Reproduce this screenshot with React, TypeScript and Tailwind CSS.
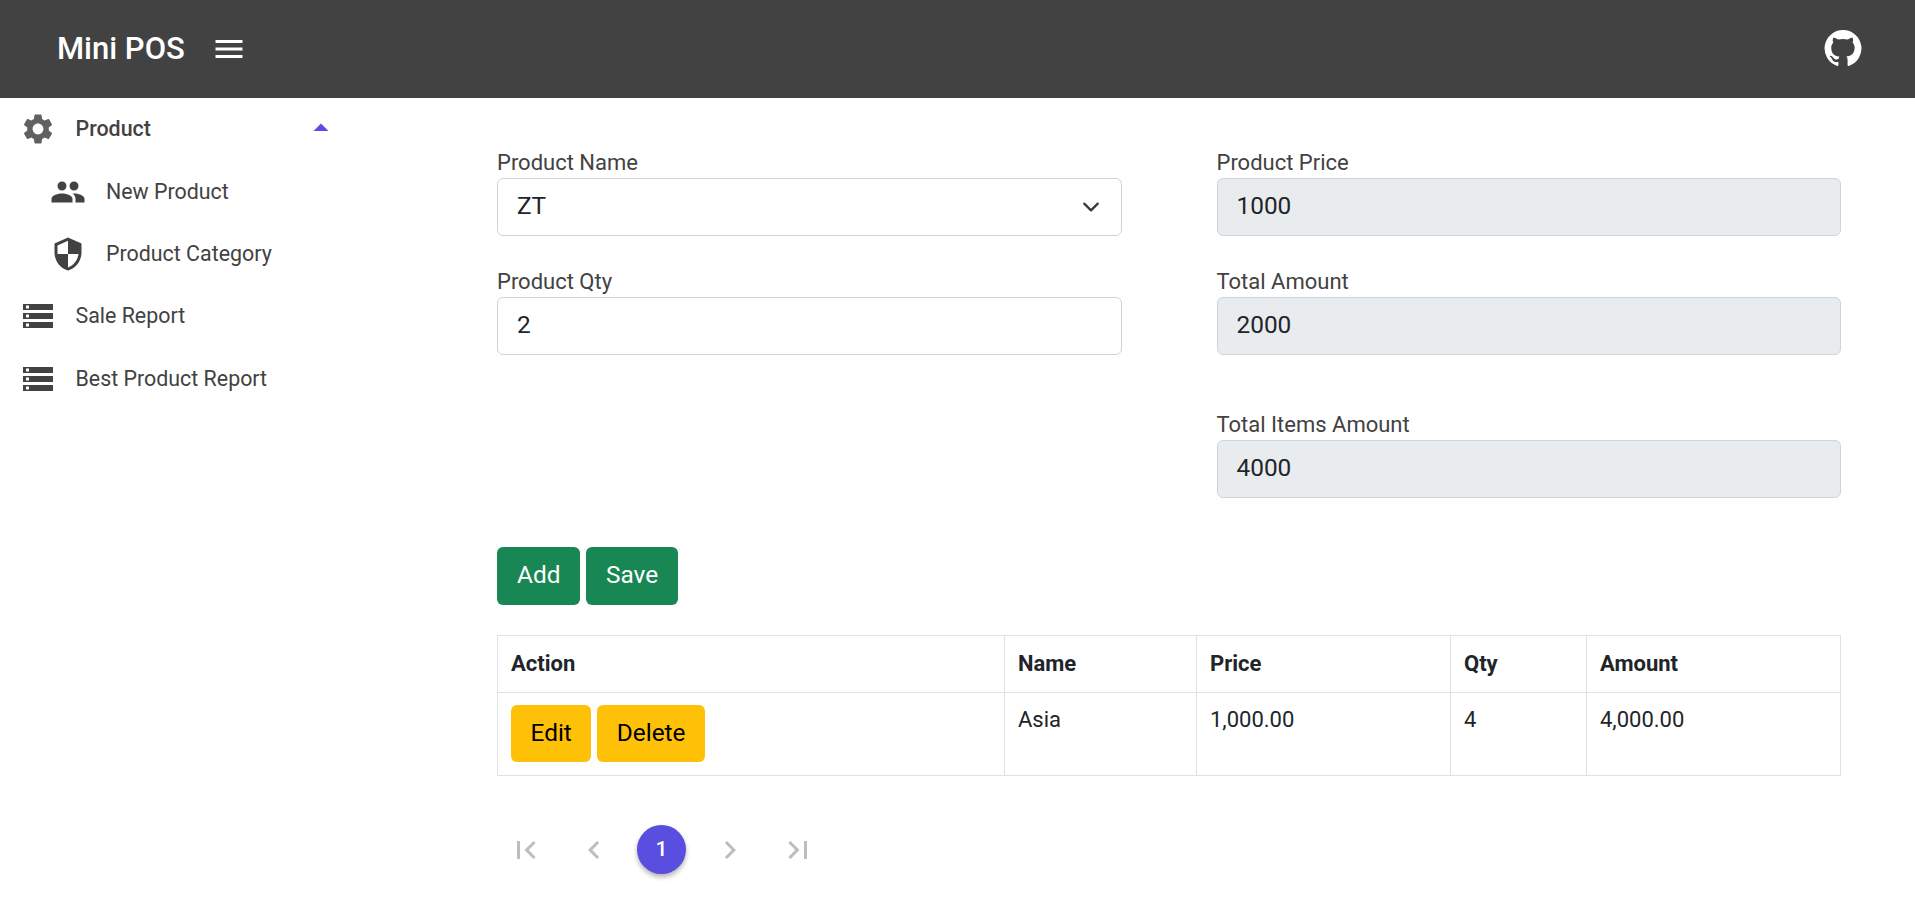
import {
  MdArrowDropUp,
  MdChevronLeft,
  MdChevronRight,
  MdFirstPage,
  MdLastPage,
  MdMenu,
  MdPeople,
  MdSecurity,
  MdSettings,
  MdStorage,
} from "react-icons/md";

function GithubIcon() {
  return (
    <svg viewBox="0 0 24 24" className="-mt-[2px] h-[40px] w-[40px] fill-white">
      <path d="M12 1.27a11 11 0 00-3.48 21.46c.55.09.73-.28.73-.55v-1.84c-3.03.64-3.67-1.46-3.67-1.46-.55-1.29-1.28-1.65-1.28-1.65-.92-.65.1-.65.1-.65 1.1 0 1.73 1.1 1.73 1.1.92 1.65 2.57 1.2 3.21.92a2 2 0 01.64-1.47c-2.47-.27-5.04-1.19-5.04-5.5 0-1.1.46-2.1 1.2-2.84a3.76 3.76 0 010-2.93s.91-.28 3.11 1.1c1.8-.49 3.7-.49 5.5 0 2.1-1.38 3.02-1.1 3.02-1.1a3.76 3.76 0 010 2.93c.83.74 1.2 1.74 1.2 2.94 0 4.21-2.57 5.13-5.04 5.4.45.37.82.92.82 2.02v3.03c0 .27.1.64.73.55A11 11 0 0012 1.27" />
    </svg>
  );
}

function Field({
  label,
  value,
  disabled,
  select,
}: {
  label: string;
  value: string;
  disabled?: boolean;
  select?: boolean;
}) {
  return (
    <div>
      <div className="h-[27px] text-[22px] leading-[24px] text-[#424242]">
        {label}
      </div>
      <div
        className={
          disabled
            ? "flex h-[58px] items-center justify-between rounded-md border border-[#ced4da] bg-[#e9ecef] px-[19px] pb-[1px] text-[24.4px] text-[#212529]"
            : "flex h-[58px] items-center justify-between rounded-md border border-[#ced4da] bg-white px-[19px] pb-[1px] text-[24.4px] text-[#212529]"
        }
      >
        <span>{value}</span>
        {select && (
          <svg
            viewBox="0 0 16 16"
            className="mr-[2px] h-[18px] w-[18px] fill-none stroke-[#343a40] stroke-2"
          >
            <path d="M2 5l6 6 6-6" strokeLinecap="round" strokeLinejoin="round" />
          </svg>
        )}
      </div>
    </div>
  );
}

function NavItem({
  icon,
  label,
  sub,
  bold,
}: {
  icon: React.ReactNode;
  label: string;
  sub?: boolean;
  bold?: boolean;
}) {
  return (
    <div
      className={
        sub
          ? "flex h-[62.4px] items-center pl-[50px] text-[#424242]"
          : "flex h-[62.4px] items-center pl-[20px] text-[#424242]"
      }
    >
      <span className={sub ? "flex w-[56px] shrink-0 items-center" : "flex w-[55.5px] shrink-0 items-center"}>
        {icon}
      </span>
      <span
        className={
          bold
            ? "text-[21.4px] font-medium text-[#424242]"
            : "text-[21.4px] text-[#424242]"
        }
      >
        {label}
      </span>
    </div>
  );
}

export default function App() {
  return (
    <div className="min-h-[911px] bg-white font-['Roboto',sans-serif]">
      <header className="flex h-[98px] items-center justify-between bg-[#424242] pl-[57px] pr-[52px]">
        <div className="flex items-center gap-[26px]">
          <span className="text-[31px] font-medium text-white">Mini POS</span>
          <MdMenu className="text-[36px] text-white" />
        </div>
        <GithubIcon />
      </header>

      <div className="flex">
        <aside className="w-[353px] shrink-0">
          <div className="relative">
            <NavItem
              icon={<MdSettings className="text-[36px] text-[#616161]" />}
              label="Product"
              bold
            />
            <MdArrowDropUp className="absolute right-[14px] top-[12px] text-[36px] text-[#5a4ee0]" />
          </div>
          <NavItem
            icon={<MdPeople className="text-[36px]" />}
            label="New Product"
            sub
          />
          <NavItem
            icon={<MdSecurity className="text-[36px]" />}
            label="Product Category"
            sub
          />
          <NavItem icon={<MdStorage className="text-[36px]" />} label="Sale Report" />
          <NavItem
            icon={<MdStorage className="text-[36px]" />}
            label="Best Product Report"
          />
        </aside>

        <main className="ml-[144px] mr-[74px] flex-1 pt-[53px]">
          <div className="grid grid-cols-2 gap-x-[95px]">
            <div className="flex flex-col gap-[34px]">
              <Field label="Product Name" value="ZT" select />
              <Field label="Product Qty" value="2" />
            </div>
            <div className="flex flex-col gap-[34px]">
              <Field label="Product Price" value="1000" disabled />
              <Field label="Total Amount" value="2000" disabled />
              <div className="mt-[24px]">
                <Field label="Total Items Amount" value="4000" disabled />
              </div>
            </div>
          </div>

          <div className="mt-[49px] flex gap-[6px]">
            <button className="h-[58px] rounded-md bg-[#198754] px-[20px] pb-[2px] text-[24.4px] text-white">
              Add
            </button>
            <button className="h-[58px] rounded-md bg-[#198754] px-[19.5px] pb-[2px] text-[24.4px] text-white">
              Save
            </button>
          </div>

          <table className="mt-[30px] w-full border-collapse text-[22px] text-[#212529]">
            <thead>
              <tr className="h-[57px] text-left font-bold">
                <th className="w-[507px] border border-[#dee2e6] px-[13px] pb-[2px]">Action</th>
                <th className="w-[192px] border border-[#dee2e6] px-[13px] pb-[2px]">Name</th>
                <th className="w-[254px] border border-[#dee2e6] px-[13px] pb-[2px]">Price</th>
                <th className="w-[136px] border border-[#dee2e6] px-[13px] pb-[2px]">Qty</th>
                <th className="border border-[#dee2e6] px-[13px] pb-[2px]">Amount</th>
              </tr>
            </thead>
            <tbody>
              <tr className="h-[83px] align-top">
                <td className="border border-[#dee2e6] px-[13px] py-[12px]">
                  <div className="flex gap-[6px]">
                    <button className="h-[57px] rounded-md bg-[#ffc107] px-[19.5px] text-[24.4px] text-black">
                      Edit
                    </button>
                    <button className="h-[57px] rounded-md bg-[#ffc107] px-[19.5px] text-[24.4px] text-black">
                      Delete
                    </button>
                  </div>
                </td>
                <td className="border border-[#dee2e6] px-[13px] py-[12px] leading-[30px]">Asia</td>
                <td className="border border-[#dee2e6] px-[13px] py-[12px] leading-[30px]">1,000.00</td>
                <td className="border border-[#dee2e6] px-[13px] py-[12px] leading-[30px]">4</td>
                <td className="border border-[#dee2e6] px-[13px] py-[12px] leading-[30px]">4,000.00</td>
              </tr>
            </tbody>
          </table>

          <div className="mt-[49px] flex items-center gap-[19px] pl-[4px] text-[#bdbdbd]">
            <span className="flex h-[49px] w-[49px] items-center justify-center">
              <MdFirstPage className="text-[36px]" />
            </span>
            <span className="flex h-[49px] w-[49px] items-center justify-center">
              <MdChevronLeft className="text-[36px]" />
            </span>
            <span className="flex h-[49px] w-[49px] items-center justify-center rounded-full bg-[#5a4ee0] text-[21px] font-medium text-white shadow-[0_3px_5px_rgba(0,0,0,0.3)]">
              1
            </span>
            <span className="flex h-[49px] w-[49px] items-center justify-center">
              <MdChevronRight className="text-[36px]" />
            </span>
            <span className="flex h-[49px] w-[49px] items-center justify-center">
              <MdLastPage className="text-[36px]" />
            </span>
          </div>
        </main>
      </div>
    </div>
  );
}
